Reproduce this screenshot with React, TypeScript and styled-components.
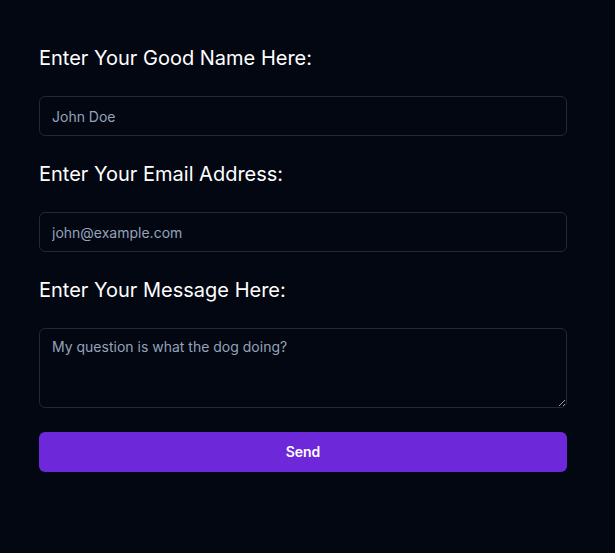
import React from "react";
import styled, { createGlobalStyle } from "styled-components";

const Global = createGlobalStyle`
  html, body { margin: 0; padding: 0; background: #030712; }
  body { font-family: Inter, "Noto Sans", sans-serif; }
  * { box-sizing: border-box; }
`;

const Page = styled.div`
  min-height: 553px;
  background: #030712;
  padding: 44px 48px 0 39px;
`;

const Form = styled.form`
  width: 528px;
  display: flex;
  flex-direction: column;
  gap: 24px;
`;

const Label = styled.label`
  display: block;
  font-family: Inter, "Noto Sans", sans-serif;
  font-size: 20px;
  line-height: 28px;
  color: #ffffff;
`;

const fieldBase = `
  width: 100%;
  background: #030712;
  border: 1px solid #1f2937;
  border-radius: 6px;
  padding: 8px 12px;
  font-family: Inter, "Noto Sans", sans-serif;
  font-size: 14px;
  line-height: 20px;
  color: #e5e7eb;
  outline: none;
  &::placeholder { color: #94a3b8; opacity: 1; }
`;

const Input = styled.input`
  ${fieldBase}
  height: 40px;
  display: block;
`;

const TextArea = styled.textarea`
  ${fieldBase}
  height: 80px;
  display: block;
  resize: vertical;
  margin: 0;
`;

const Button = styled.button`
  height: 40px;
  width: 100%;
  border: none;
  border-radius: 6px;
  background: #6d28d9;
  color: #ffffff;
  font-family: Inter, "Noto Sans", sans-serif;
  font-size: 14px;
  line-height: 20px;
  font-weight: 600;
  padding: 0;
  cursor: pointer;
`;

export default function App() {
  return (
    <>
      <Global />
      <Page>
        <Form onSubmit={(e) => e.preventDefault()}>
          <Label htmlFor="name">Enter Your Good Name Here:</Label>
          <Input id="name" placeholder="John Doe" />
          <Label htmlFor="email">Enter Your Email Address:</Label>
          <Input id="email" placeholder="john@example.com" />
          <Label htmlFor="msg">Enter Your Message Here:</Label>
          <TextArea id="msg" placeholder="My question is what the dog doing?" />
          <Button type="submit">Send</Button>
        </Form>
      </Page>
    </>
  );
}
